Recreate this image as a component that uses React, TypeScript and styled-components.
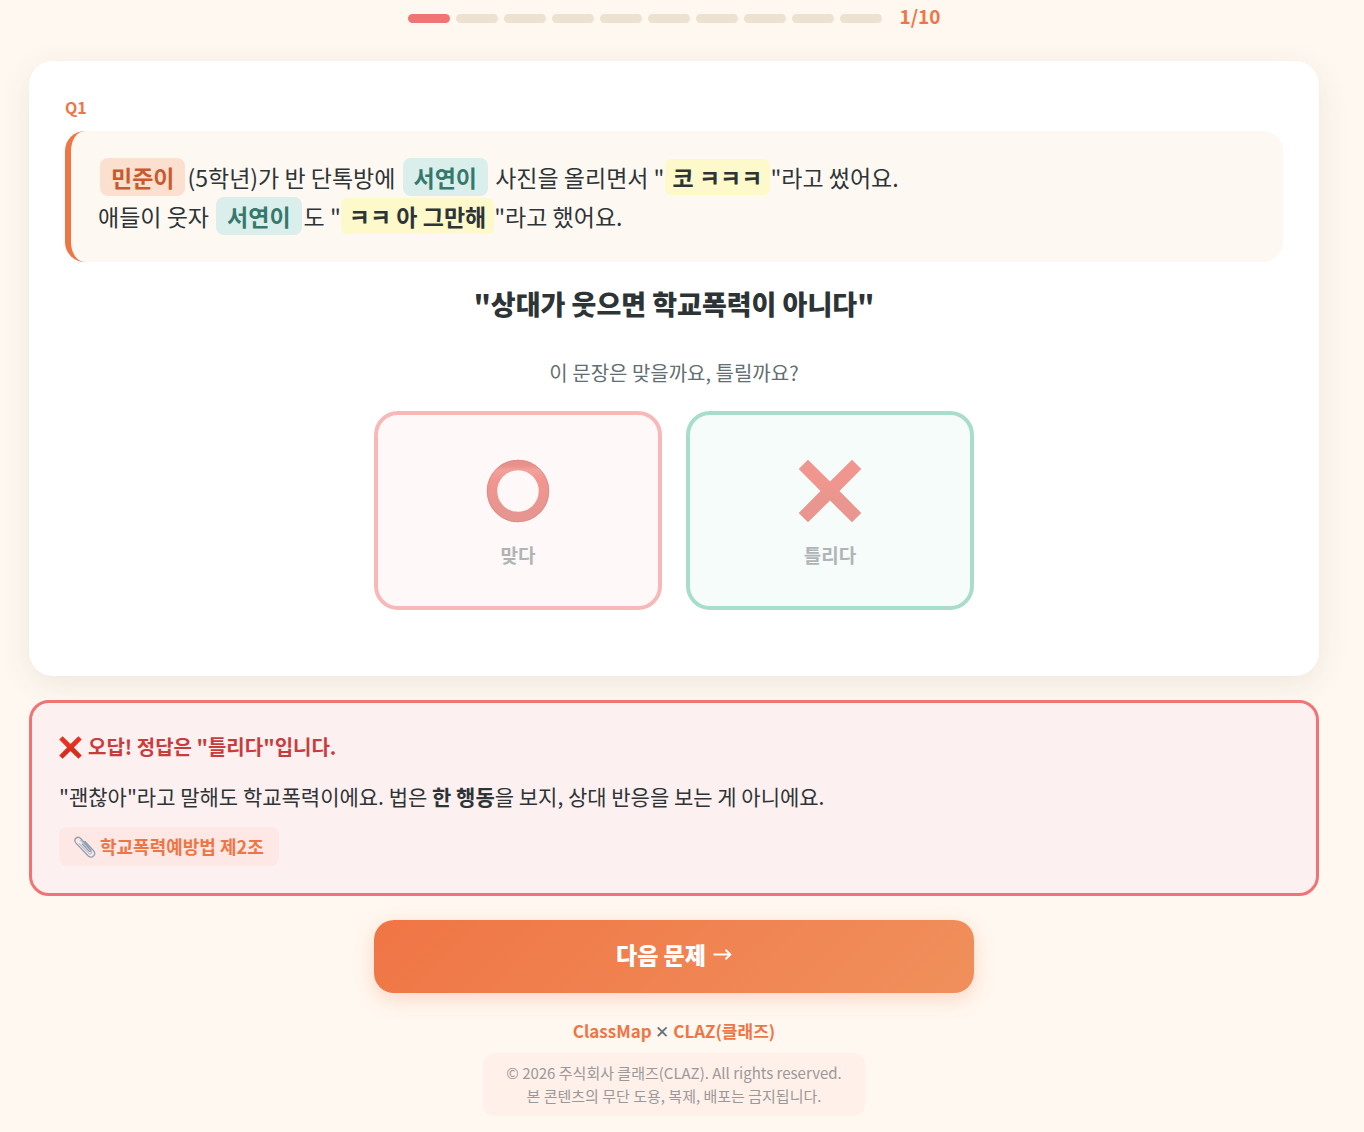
import React from "react";
import styled, { createGlobalStyle } from "styled-components";

const GlobalStyle = createGlobalStyle`
  *, *::before, *::after { box-sizing: border-box; }
  body {
    margin: 0;
    background: #fff8f0;
    color: #2d3436;
    font-family: "Noto Sans CJK KR", "Noto Sans", sans-serif;
  }
  button { font: inherit; cursor: pointer; }
  p, h1, h2 { margin: 0; }
`;

const Page = styled.main`
  display: flex;
  flex-direction: column;
  gap: 24px;
  padding: 0 45px 16px 29px;
`;

const Progress = styled.div`
  display: flex;
  justify-content: center;
  align-items: flex-start;
  gap: 18px;
  height: 37px;
`;

const Steps = styled.div`
  display: flex;
  gap: 6px;
  padding-top: 14px;
`;

const Step = styled.span<{ $done: boolean }>`
  width: 42px;
  height: 9px;
  border-radius: 5px;
  background: ${(p) => (p.$done ? "#f07474" : "#ede1d0")};
`;

const Count = styled.span`
  color: #f07545;
  font-size: 19px;
  font-weight: 700;
  line-height: 32px;
`;

const Card = styled.section`
  display: flex;
  flex-direction: column;
  padding: 35px 36px 66px;
  border-radius: 24px;
  background: #fff;
  box-shadow: 0 8px 32px rgba(60, 70, 50, 0.09);
`;

const Number = styled.p`
  margin-bottom: 13px;
  color: #f07545;
  font-size: 16px;
  font-weight: 700;
  line-height: 22px;
`;

const Story = styled.p`
  padding: 27px 27px 26px;
  border-left: 6px solid #f07545;
  border-radius: 20px;
  background: #fef8f2;
  font-size: 23px;
  line-height: 39px;
`;

const Name = styled.strong<{ $tone: "orange" | "teal" }>`
  margin: 0 2px;
  padding: 2px 11px;
  border-radius: 8px;
  font-weight: 700;
  color: ${(p) => (p.$tone === "orange" ? "#c95a2e" : "#35796c")};
  background: ${(p) => (p.$tone === "orange" ? "#fbe0d0" : "#daeeec")};
`;

const Quote = styled.mark`
  padding: 1px 8px;
  border-radius: 6px;
  color: inherit;
  font-weight: 700;
  background: #fef9cb;
`;

const Statement = styled.h1`
  margin-top: 21px;
  text-align: center;
  font-size: 27px;
  font-weight: 900;
  line-height: 42px;
`;

const Prompt = styled.p`
  margin: 32px 0 23px;
  text-align: center;
  color: #636e72;
  font-size: 20px;
  line-height: 31px;
`;

const Answers = styled.div`
  display: grid;
  grid-template-columns: 1fr 1fr;
  gap: 24px;
  width: 100%;
  max-width: 600px;
  margin: 0 auto;
`;

const Answer = styled.button<{ $line: string; $fill: string }>`
  display: flex;
  flex-direction: column;
  align-items: center;
  gap: 17px;
  padding: 44px 20px 37px;
  border: 4px solid ${(p) => p.$line};
  border-radius: 24px;
  background: ${(p) => p.$fill};
  color: #b0b4b6;
  font-size: 19px;
  font-weight: 700;
  line-height: 29px;
  svg { display: block; }
`;

const Feedback = styled.section`
  padding: 27px;
  border: 3px solid #f07474;
  border-radius: 20px;
  background: #fdf0f0;
`;

const Result = styled.h2`
  display: flex;
  align-items: center;
  gap: 6px;
  color: #c93c3c;
  font-size: 20px;
  font-weight: 700;
  line-height: 34px;
`;

const Explanation = styled.p`
  margin: 15px 0 13px;
  font-size: 21px;
  line-height: 35px;
`;

const Law = styled.span`
  display: inline-flex;
  align-items: center;
  gap: 4px;
  padding: 6px 15px;
  border-radius: 8px;
  background: #fde8e5;
  color: #f07545;
  font-size: 18px;
  font-weight: 700;
  line-height: 27px;
  vertical-align: top;
`;

const Next = styled.button`
  display: flex;
  justify-content: center;
  align-items: center;
  gap: 7px;
  width: 100%;
  max-width: 600px;
  margin: 0 auto;
  padding: 16px 18px 20px;
  border: 0;
  border-radius: 20px;
  background: linear-gradient(135deg, #f07545, #f0905c);
  box-shadow: 0 6px 20px rgba(240, 117, 69, 0.25);
  color: #fff;
  font-size: 23px;
  font-weight: 900;
  line-height: 37px;
`;

const Footer = styled.footer`
  display: flex;
  flex-direction: column;
  align-items: center;
  gap: 9px;
`;

const Brands = styled.p`
  color: #636e72;
  font-size: 17px;
  line-height: 27px;
  strong { color: #f07545; font-weight: 700; }
`;

const Copyright = styled.p`
  padding: 8px 23px 9px;
  border-radius: 12px;
  background: #fff0e9;
  color: #999;
  font-size: 15px;
  line-height: 23px;
  text-align: center;
`;

const Ring = () => (
  <svg width="64" height="64" viewBox="0 0 64 64" aria-hidden="true">
    <defs>
      <linearGradient id="ring" x1="0" y1="0" x2="0" y2="1">
        <stop offset="0" stopColor="#e8908a" />
        <stop offset="0.1" stopColor="#f1a19c" />
        <stop offset="0.3" stopColor="#f1958f" />
        <stop offset="1" stopColor="#e69590" />
      </linearGradient>
    </defs>
    <circle cx="32" cy="32" r="26" fill="none" stroke="url(#ring)" strokeWidth="10.5" />
    <circle cx="32" cy="32" r="30.7" fill="none" stroke="#d98a84" strokeWidth="1" opacity="0.7" />
  </svg>
);

const Cross = ({ size, id, from, to }: { size: number; id: string; from: string; to: string }) => (
  <svg width={size} height={size} viewBox="0 0 64 64" aria-hidden="true">
    <defs>
      <linearGradient id={id} x1="0" y1="0" x2="0" y2="1">
        <stop offset="0.3" stopColor={from} />
        <stop offset="0.7" stopColor={to} />
      </linearGradient>
    </defs>
    <path
      d="M10 .7 32 22.5 54 .7 63.3 10 41.5 32 63.3 54 54 63.3 32 41.5 10 63.3 .7 54 22.5 32 .7 10Z"
      fill={`url(#${id})`}
    />
  </svg>
);

const Clip = () => (
  <svg width="22" height="22" viewBox="0 0 22 22" fill="none" strokeLinecap="round" aria-hidden="true">
    <path
      d="M6.2 4.2 17 15.1c1.8 1.9-.4 3.9-2.1 2.2L5.2 7.6"
      stroke="#b9c2cf"
      strokeWidth="1.2"
    />
    <path
      d="m8.5 8.3 6.3 6.6c1.4 1.4 2.7 0 1.4-1.4L7.2 3C3.5-.9-1.2 3.2 2 7.1l12 12.6c3.9 3.6 8.9-1 5.6-4.9L11 5.5"
      stroke="#8f9eb0"
      strokeWidth="1.3"
    />
  </svg>
);

const Arrow = () => (
  <svg width="19" height="14" viewBox="0 0 19 14" fill="none" stroke="#fff" strokeWidth="1.9" aria-hidden="true">
    <path d="M.5 6.5h17M12.5 1.8l4.8 4.7-4.8 4.7" />
  </svg>
);

const TOTAL = 10;
const CURRENT = 1;

export default function App() {
  return (
    <>
      <GlobalStyle />
      <Page>
        <Progress>
          <Steps>
            {Array.from({ length: TOTAL }, (_, i) => (
              <Step key={i} $done={i < CURRENT} />
            ))}
          </Steps>
          <Count>
            {CURRENT}/{TOTAL}
          </Count>
        </Progress>

        <Card>
          <Number>Q1</Number>
          <Story>
            <Name $tone="orange">민준이</Name>(5학년)가 반 단톡방에 <Name $tone="teal">서연이</Name> 사진을
            올리면서 "<Quote>코 ㅋㅋㅋ</Quote>"라고 썼어요.
            <br />
            애들이 웃자 <Name $tone="teal">서연이</Name>도 "<Quote>ㅋㅋ 아 그만해</Quote>"라고 했어요.
          </Story>
          <Statement>"상대가 웃으면 학교폭력이 아니다"</Statement>
          <Prompt>이 문장은 맞을까요, 틀릴까요?</Prompt>
          <Answers>
            <Answer type="button" $line="#f8b8b8" $fill="#fef8f8">
              <Ring />
              맞다
            </Answer>
            <Answer type="button" $line="#a8dccb" $fill="#f6fcfa">
              <Cross size={64} id="cross-soft" from="#f1968f" to="#e8968f" />
              틀리다
            </Answer>
          </Answers>
        </Card>

        <Feedback>
          <Result>
            <Cross size={23} id="cross-strong" from="#e8321f" to="#d62d1d" />
            오답! 정답은 "틀리다"입니다.
          </Result>
          <Explanation>
            "괜찮아"라고 말해도 학교폭력이에요. 법은 <strong>한 행동</strong>을 보지, 상대 반응을 보는 게
            아니에요.
          </Explanation>
          <Law>
            <Clip />
            학교폭력예방법 제2조
          </Law>
        </Feedback>

        <Next type="button">
          다음 문제
          <Arrow />
        </Next>

        <Footer>
          <Brands>
            <strong>ClassMap</strong> ✕ <strong>CLAZ(클래즈)</strong>
          </Brands>
          <Copyright>
            © 2026 주식회사 클래즈(CLAZ). All rights reserved.
            <br />본 콘텐츠의 무단 도용, 복제, 배포는 금지됩니다.
          </Copyright>
        </Footer>
      </Page>
    </>
  );
}
